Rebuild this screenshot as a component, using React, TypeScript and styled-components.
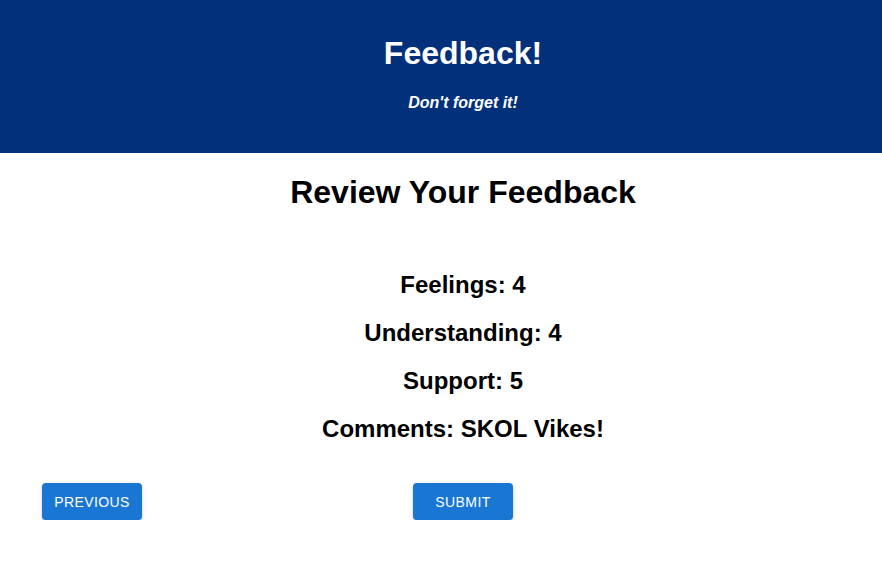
import React from "react";
import styled, { createGlobalStyle } from "styled-components";

const GlobalStyle = createGlobalStyle`
  html, body { margin: 0; padding: 0; background: #ffffff; }
  body { font-family: "Liberation Sans", Arial, Helvetica, sans-serif; color: #000; }
`;

const Page = styled.div`
  display: flex;
  flex-direction: column;
  width: 100%;
`;

const Header = styled.header`
  background: #03307a;
  height: 153px;
  box-sizing: border-box;
  padding: 35px 0 0 44px;
  display: flex;
  flex-direction: column;
  align-items: center;
  color: #ffffff;
`;

const HeaderTitle = styled.h1`
  margin: 0;
  font-size: 32px;
  line-height: 37px;
  font-weight: 700;
`;

const HeaderSub = styled.h4`
  margin: 21px 0 0;
  font-size: 16px;
  line-height: 20px;
  font-weight: 700;
  font-style: italic;
`;

const Main = styled.main`
  display: flex;
  flex-direction: column;
  align-items: center;
  padding: 21px 0 0 44px;
`;

const Title = styled.h1`
  margin: 0;
  font-size: 32px;
  line-height: 37px;
  font-weight: 700;
`;

const List = styled.div`
  display: flex;
  flex-direction: column;
  align-items: center;
  gap: 20px;
  margin-top: 60px;
`;

const Item = styled.h2`
  margin: 0;
  font-size: 24px;
  line-height: 28px;
  font-weight: 700;
`;

const ButtonRow = styled.div`
  align-self: stretch;
  display: grid;
  grid-template-columns: 1fr auto 1fr;
  margin-top: 40px;
`;

const Button = styled.button<{ $col: number }>`
  grid-column: ${(p) => p.$col};
  justify-self: ${(p) => (p.$col === 1 ? "start" : "center")};
  margin-left: ${(p) => (p.$col === 1 ? "-2px" : "0")};
  width: 100px;
  height: 37px;
  border: none;
  border-radius: 4px;
  background: #1976d2;
  color: #ffffff;
  font-family: "Liberation Sans", Arial, Helvetica, sans-serif;
  font-size: 14px;
  font-weight: 400;
  letter-spacing: 0.4px;
  text-transform: uppercase;
  cursor: pointer;
  box-shadow: 0px 3px 1px -2px rgba(0, 0, 0, 0.2), 0px 2px 2px 0px rgba(0, 0, 0, 0.14),
    0px 1px 5px 0px rgba(0, 0, 0, 0.12);
`;

export default function App() {
  const items = [
    ["Feelings", "4"],
    ["Understanding", "4"],
    ["Support", "5"],
    ["Comments", "SKOL Vikes!"],
  ];
  return (
    <Page>
      <GlobalStyle />
      <Header>
        <HeaderTitle>Feedback!</HeaderTitle>
        <HeaderSub>Don't forget it!</HeaderSub>
      </Header>
      <Main>
        <Title>Review Your Feedback</Title>
        <List>
          {items.map(([k, v]) => (
            <Item key={k}>
              {k}: {v}
            </Item>
          ))}
        </List>
        <ButtonRow>
          <Button $col={1}>Previous</Button>
          <Button $col={2}>Submit</Button>
        </ButtonRow>
      </Main>
    </Page>
  );
}
